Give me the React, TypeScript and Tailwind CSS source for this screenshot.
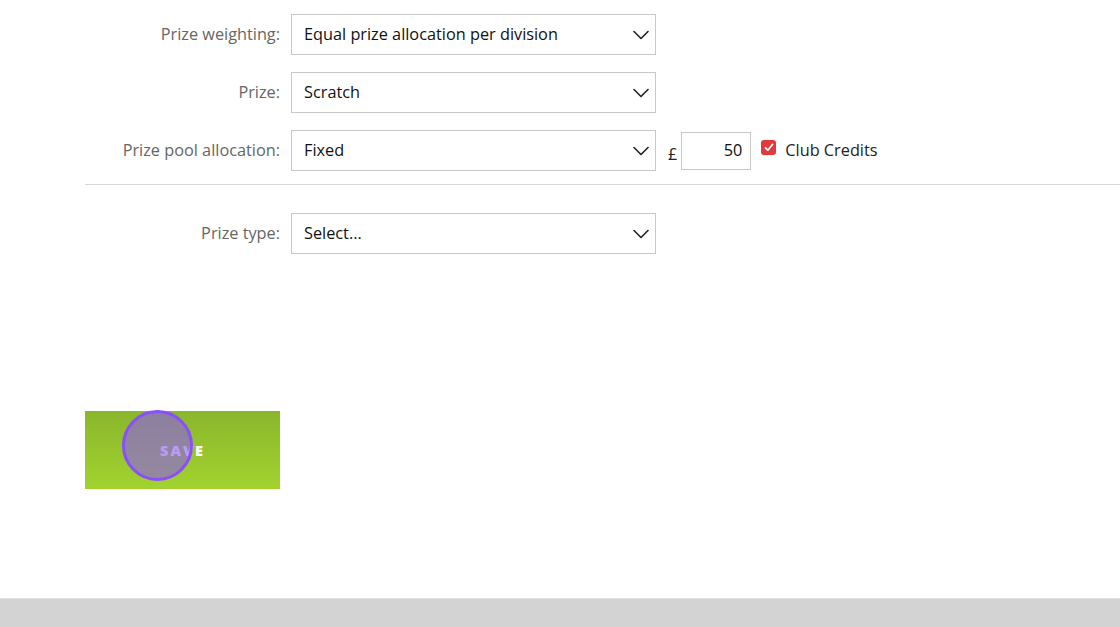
import React from 'react';

const Chevron = () => (
    <svg width="16" height="10" viewBox="0 0 16 10" fill="none" className="shrink-0">
        <path d="M1 1.5 L8 8.5 L15 1.5" stroke="#222" strokeWidth="1.6" strokeLinecap="round" strokeLinejoin="round" />
    </svg>
);

const FakeSelect: React.FC<{ value: string }> = ({ value }) => (
    <div className="w-[365px] h-[41px] border border-[#c8c8c8] bg-white flex items-center justify-between pl-[12px] pr-[6px] text-[16.3px] text-[#111]">
        <span>{value}</span>
        <Chevron />
    </div>
);

const Row: React.FC<{ label: string; children: React.ReactNode }> = ({ label, children }) => (
    <div className="flex items-center">
        <div className="w-[291px] shrink-0 pr-[11px] text-right text-[16.3px] text-[#666]">{label}</div>
        {children}
    </div>
);

const App: React.FC = () => {
    return (
        <div className="w-[1120px] h-[627px] bg-white flex flex-col overflow-hidden" style={{ fontFamily: '"Open Sans", "Liberation Sans", sans-serif' }}>
            <div className="flex-1 flex flex-col">
                <div className="flex flex-col gap-[17px] pt-[14px]">
                    <Row label="Prize weighting:">
                        <FakeSelect value="Equal prize allocation per division" />
                    </Row>
                    <Row label="Prize:">
                        <FakeSelect value="Scratch" />
                    </Row>
                    <Row label="Prize pool allocation:">
                        <FakeSelect value="Fixed" />
                        <span className="ml-[12px] mt-[8px] text-[16.3px] text-[#222]">£</span>
                        <div className="ml-[4px] w-[70px] h-[38px] border border-[#c8c8c8] flex items-center justify-end pr-[8px] text-[16.3px] text-[#111]">50</div>
                        <div className="ml-[10px] mb-[6px] w-[15px] h-[15px] rounded-[3px] bg-[#e03a3e] flex items-center justify-center">
                            <svg width="10" height="9" viewBox="0 0 10 9" fill="none">
                                <path d="M1.5 4.8 L3.9 7.2 L8.5 1.5" stroke="#fff" strokeWidth="1.8" strokeLinecap="round" strokeLinejoin="round" />
                            </svg>
                        </div>
                        <span className="ml-[9px] text-[16.3px] text-[#222]">Club Credits</span>
                    </Row>
                </div>
                <div className="ml-[85px] mt-[13px] h-px bg-[#d6d6d6]" />
                <div className="mt-[28px]">
                    <Row label="Prize type:">
                        <FakeSelect value="Select..." />
                    </Row>
                </div>
                <div className="ml-[85px] mt-[157px] relative w-[195px] h-[78px]">
                    <button className="w-full h-full bg-gradient-to-b from-[#8ab62c] to-[#a2d32f] text-white font-extrabold text-[14.5px] tracking-[2px] flex items-center justify-center pt-[2px]">
                        SAVE
                    </button>
                    <div className="absolute left-[37px] top-[-1px] w-[71px] h-[71px] rounded-full border-[3px] border-[#8b4dff] bg-[#8d5aed]/60" />
                </div>
            </div>
            <div className="h-[29px] bg-[#d3d3d3] border-t border-[#e2e2e2]" />
        </div>
    );
};

export default App;
